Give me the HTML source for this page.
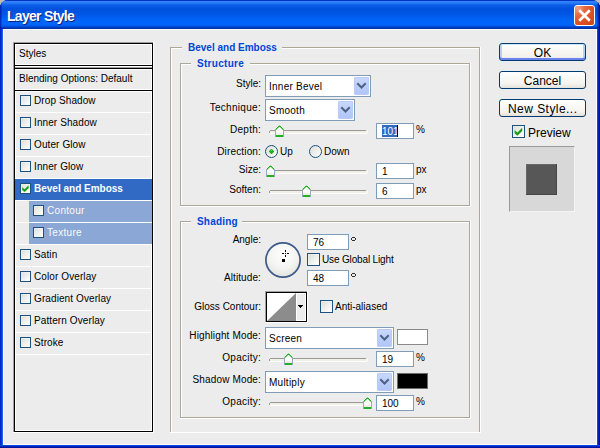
<!DOCTYPE html>
<html><head><meta charset="utf-8"><style>
html,body{margin:0;padding:0;width:600px;height:448px;overflow:hidden;background:#BDBDB5;}
body>div,body>svg{position:absolute;}
</style></head><body>
<div style="left:0px;top:0px;width:600px;height:448px;background:#0831D9;border-radius:8px 8px 0 0;"></div>
<div style="left:0px;top:0px;width:600px;height:29px;background:linear-gradient(to bottom,#0032C4 0px,#0032C4 1px,#3486FA 1px,#2A7AF5 3px,#0C5FEA 5px,#0050DC 9px,#0056E4 14px,#0062F6 19px,#0066FC 24px,#005AEC 26px,#0042CC 27px,#002E9C 29px);border-radius:8px 8px 0 0;"></div>
<div style="left:0px;top:29px;width:1px;height:419px;background:#0028C8;"></div>
<div style="left:1px;top:29px;width:1px;height:419px;background:#0A3CD8;"></div>
<div style="left:2px;top:29px;width:1px;height:419px;background:#1E5CF0;"></div>
<div style="left:597px;top:29px;width:1px;height:419px;background:#0A46E6;"></div>
<div style="left:598px;top:29px;width:1px;height:419px;background:#0024BC;"></div>
<div style="left:599px;top:29px;width:1px;height:419px;background:#00129A;"></div>
<div style="left:0px;top:445px;width:600px;height:1px;background:#0A46E6;"></div>
<div style="left:0px;top:446px;width:600px;height:1px;background:#0024BC;"></div>
<div style="left:0px;top:447px;width:600px;height:1px;background:#00149C;"></div>
<div style="left:3px;top:29px;width:594px;height:416px;background:#ECECEC;"></div>
<div style="left:3px;top:29px;width:594px;height:1px;background:#FFFFFF;"></div>
<div style="left:3px;top:29px;width:1px;height:416px;background:#FFFFFF;"></div>
<div style="left:3px;top:444px;width:594px;height:1px;background:#FFFFFF;"></div>
<div style="left:596px;top:29px;width:1px;height:416px;background:#FFFFFF;"></div>
<div style="left:597px;top:4px;width:1px;height:25px;background:rgba(0,30,170,0.45);"></div>
<div style="left:598px;top:3px;width:1px;height:26px;background:rgba(0,20,150,0.7);"></div>
<div style="left:599px;top:5px;width:1px;height:24px;background:rgba(0,10,120,0.85);"></div>
<div style="left:0px;top:5px;width:1px;height:24px;background:rgba(0,10,150,0.6);"></div>
<div style="left:1px;top:3px;width:1px;height:26px;background:rgba(0,20,170,0.3);"></div>
<div style="left:7px;top:8px;font:bold 14px/16px 'Liberation Sans',sans-serif;color:#FFFFFF;white-space:nowrap;letter-spacing:-0.7px;text-shadow:1px 1px 0 #0A1E7A;">Layer Style</div>
<div style="left:574px;top:5px;width:19px;height:19px;border:1px solid #FFFFFF;border-radius:3px;background:radial-gradient(circle at 15% 12%,#F2A488 0,#E5693F 30%,#DE5324 60%,#C8421A 100%);"></div>
<svg style="left:574px;top:5px" width="21" height="21" viewBox="0 0 21 21"><path d="M6.2 6.2 L14.8 14.8 M14.8 6.2 L6.2 14.8" stroke="#FFFFFF" stroke-width="2.7" stroke-linecap="square"/></svg>
<div style="left:13px;top:42px;width:141px;height:1px;background:#A0A0A0;"></div>
<div style="left:13px;top:42px;width:1px;height:25px;background:#A0A0A0;"></div>
<div style="left:13px;top:66px;width:141px;height:1px;background:#FFFFFF;"></div>
<div style="left:153px;top:42px;width:1px;height:25px;background:#FFFFFF;"></div>
<div style="left:14px;top:43px;width:139px;height:23px;background:#000;"></div>
<div style="left:15px;top:44px;width:137px;height:21px;background:#FFFFFF;"></div>
<div style="left:16px;top:45px;width:135px;height:19px;background:#ECECEC;"></div>
<div style="left:13px;top:67px;width:141px;height:1px;background:#A0A0A0;"></div>
<div style="left:13px;top:67px;width:1px;height:366px;background:#A0A0A0;"></div>
<div style="left:13px;top:432px;width:141px;height:1px;background:#FFFFFF;"></div>
<div style="left:153px;top:67px;width:1px;height:366px;background:#FFFFFF;"></div>
<div style="left:14px;top:68px;width:139px;height:364px;background:#000;"></div>
<div style="left:15px;top:69px;width:137px;height:362px;background:#FFFFFF;"></div>
<div style="left:16px;top:70px;width:135px;height:360px;background:#ECECEC;"></div>
<div style="left:13px;top:65px;width:1px;height:4px;background:#A0A0A0;"></div>
<div style="left:14px;top:65px;width:1px;height:4px;background:#000;"></div>
<div style="left:152px;top:65px;width:1px;height:4px;background:#000;"></div>
<div style="left:153px;top:65px;width:1px;height:4px;background:#FFFFFF;"></div>
<div style="left:19px;top:48px;font:normal 10px/12px 'Liberation Sans',sans-serif;color:#000;white-space:nowrap;">Styles</div>
<div style="left:15px;top:89px;width:137px;height:1px;background:#FFFFFF;"></div>
<div style="left:15px;top:90px;width:137px;height:1px;background:#000;"></div>
<div style="left:15px;top:91px;width:137px;height:1px;background:#FFFFFF;"></div>
<div style="left:19px;top:73px;font:normal 10px/12px 'Liberation Sans',sans-serif;color:#000;white-space:nowrap;">Blending Options: Default</div>
<div style="left:15px;top:112px;width:137px;height:1px;background:#FFFFFF;"></div>
<div style="left:20px;top:95px;width:9px;height:9px;border:1px solid #1C5180;background:linear-gradient(135deg,#DCDCD7 0%,#F6F6F3 70%,#FFFFFF 100%);box-shadow:inset 1px 1px 0 #FFFFFF55;"></div>
<div style="left:34px;top:95px;font:normal 10px/12px 'Liberation Sans',sans-serif;color:#000;white-space:nowrap;letter-spacing:0.1px;">Drop Shadow</div>
<div style="left:15px;top:134px;width:137px;height:1px;background:#FFFFFF;"></div>
<div style="left:20px;top:117px;width:9px;height:9px;border:1px solid #1C5180;background:linear-gradient(135deg,#DCDCD7 0%,#F6F6F3 70%,#FFFFFF 100%);box-shadow:inset 1px 1px 0 #FFFFFF55;"></div>
<div style="left:34px;top:117px;font:normal 10px/12px 'Liberation Sans',sans-serif;color:#000;white-space:nowrap;letter-spacing:0.1px;">Inner Shadow</div>
<div style="left:15px;top:156px;width:137px;height:1px;background:#FFFFFF;"></div>
<div style="left:20px;top:139px;width:9px;height:9px;border:1px solid #1C5180;background:linear-gradient(135deg,#DCDCD7 0%,#F6F6F3 70%,#FFFFFF 100%);box-shadow:inset 1px 1px 0 #FFFFFF55;"></div>
<div style="left:34px;top:139px;font:normal 10px/12px 'Liberation Sans',sans-serif;color:#000;white-space:nowrap;letter-spacing:0.1px;">Outer Glow</div>
<div style="left:15px;top:178px;width:137px;height:1px;background:#FFFFFF;"></div>
<div style="left:20px;top:161px;width:9px;height:9px;border:1px solid #1C5180;background:linear-gradient(135deg,#DCDCD7 0%,#F6F6F3 70%,#FFFFFF 100%);box-shadow:inset 1px 1px 0 #FFFFFF55;"></div>
<div style="left:34px;top:161px;font:normal 10px/12px 'Liberation Sans',sans-serif;color:#000;white-space:nowrap;letter-spacing:0.1px;">Inner Glow</div>
<div style="left:15px;top:200px;width:137px;height:1px;background:#FFFFFF;"></div>
<div style="left:15px;top:179px;width:137px;height:21px;background:#316AC5;"></div>
<div style="left:20px;top:183px;width:9px;height:9px;border:1px solid #1C5180;background:linear-gradient(135deg,#DCDCD7 0%,#F6F6F3 70%,#FFFFFF 100%);box-shadow:inset 1px 1px 0 #FFFFFF55;"></div>
<svg style="left:20px;top:183px" width="11" height="11" viewBox="0 0 13 13"><path d="M2.6 5 L5.4 7.5 L10.2 2.7 L10.2 6.1 L5.4 10.7 L2.6 8.3 Z" fill="#1A9E1A"/></svg>
<div style="left:34px;top:183px;font:bold 10px/12px 'Liberation Sans',sans-serif;color:#FFFFFF;white-space:nowrap;">Bevel and Emboss</div>
<div style="left:15px;top:222px;width:137px;height:1px;background:#FFFFFF;"></div>
<div style="left:29px;top:201px;width:123px;height:21px;background:#8BA7D6;"></div>
<div style="left:33px;top:205px;width:9px;height:9px;border:1px solid #1C5180;background:linear-gradient(135deg,#DCDCD7 0%,#F6F6F3 70%,#FFFFFF 100%);box-shadow:inset 1px 1px 0 #FFFFFF55;"></div>
<div style="left:47px;top:205px;font:normal 10px/12px 'Liberation Sans',sans-serif;color:#FAFAFA;white-space:nowrap;letter-spacing:0.3px;">Contour</div>
<div style="left:15px;top:244px;width:137px;height:1px;background:#FFFFFF;"></div>
<div style="left:29px;top:223px;width:123px;height:21px;background:#8BA7D6;"></div>
<div style="left:33px;top:227px;width:9px;height:9px;border:1px solid #1C5180;background:linear-gradient(135deg,#DCDCD7 0%,#F6F6F3 70%,#FFFFFF 100%);box-shadow:inset 1px 1px 0 #FFFFFF55;"></div>
<div style="left:47px;top:227px;font:normal 10px/12px 'Liberation Sans',sans-serif;color:#FAFAFA;white-space:nowrap;letter-spacing:0.3px;">Texture</div>
<div style="left:15px;top:266px;width:137px;height:1px;background:#FFFFFF;"></div>
<div style="left:20px;top:249px;width:9px;height:9px;border:1px solid #1C5180;background:linear-gradient(135deg,#DCDCD7 0%,#F6F6F3 70%,#FFFFFF 100%);box-shadow:inset 1px 1px 0 #FFFFFF55;"></div>
<div style="left:34px;top:249px;font:normal 10px/12px 'Liberation Sans',sans-serif;color:#000;white-space:nowrap;letter-spacing:0.1px;">Satin</div>
<div style="left:15px;top:288px;width:137px;height:1px;background:#FFFFFF;"></div>
<div style="left:20px;top:271px;width:9px;height:9px;border:1px solid #1C5180;background:linear-gradient(135deg,#DCDCD7 0%,#F6F6F3 70%,#FFFFFF 100%);box-shadow:inset 1px 1px 0 #FFFFFF55;"></div>
<div style="left:34px;top:271px;font:normal 10px/12px 'Liberation Sans',sans-serif;color:#000;white-space:nowrap;letter-spacing:0.1px;">Color Overlay</div>
<div style="left:15px;top:310px;width:137px;height:1px;background:#FFFFFF;"></div>
<div style="left:20px;top:293px;width:9px;height:9px;border:1px solid #1C5180;background:linear-gradient(135deg,#DCDCD7 0%,#F6F6F3 70%,#FFFFFF 100%);box-shadow:inset 1px 1px 0 #FFFFFF55;"></div>
<div style="left:34px;top:293px;font:normal 10px/12px 'Liberation Sans',sans-serif;color:#000;white-space:nowrap;letter-spacing:0.1px;">Gradient Overlay</div>
<div style="left:15px;top:332px;width:137px;height:1px;background:#FFFFFF;"></div>
<div style="left:20px;top:315px;width:9px;height:9px;border:1px solid #1C5180;background:linear-gradient(135deg,#DCDCD7 0%,#F6F6F3 70%,#FFFFFF 100%);box-shadow:inset 1px 1px 0 #FFFFFF55;"></div>
<div style="left:34px;top:315px;font:normal 10px/12px 'Liberation Sans',sans-serif;color:#000;white-space:nowrap;letter-spacing:0.1px;">Pattern Overlay</div>
<div style="left:15px;top:354px;width:137px;height:1px;background:#FFFFFF;"></div>
<div style="left:20px;top:337px;width:9px;height:9px;border:1px solid #1C5180;background:linear-gradient(135deg,#DCDCD7 0%,#F6F6F3 70%,#FFFFFF 100%);box-shadow:inset 1px 1px 0 #FFFFFF55;"></div>
<div style="left:34px;top:337px;font:normal 10px/12px 'Liberation Sans',sans-serif;color:#000;white-space:nowrap;letter-spacing:0.1px;">Stroke</div>
<div style="left:170px;top:47px;width:12px;height:1px;background:#ACA899;"></div>
<div style="left:171px;top:48px;width:11px;height:1px;background:#FFFFFF;"></div>
<div style="left:282px;top:47px;width:198px;height:1px;background:#ACA899;"></div>
<div style="left:282px;top:48px;width:198px;height:1px;background:#FFFFFF;"></div>
<div style="left:170px;top:47px;width:1px;height:385px;background:#ACA899;"></div>
<div style="left:171px;top:48px;width:1px;height:384px;background:#FFFFFF;"></div>
<div style="left:479px;top:47px;width:1px;height:385px;background:#ACA899;"></div>
<div style="left:480px;top:47px;width:1px;height:386px;background:#FFFFFF;"></div>
<div style="left:170px;top:432px;width:311px;height:1px;background:#FFFFFF;"></div>
<div style="left:188px;top:42px;font:bold 10px/12px 'Liberation Sans',sans-serif;color:#0046D5;white-space:nowrap;">Bevel and Emboss</div>
<div style="left:180px;top:63px;width:11px;height:1px;background:#ACA899;"></div>
<div style="left:181px;top:64px;width:10px;height:1px;background:#FFFFFF;"></div>
<div style="left:250px;top:63px;width:220px;height:1px;background:#ACA899;"></div>
<div style="left:250px;top:64px;width:220px;height:1px;background:#FFFFFF;"></div>
<div style="left:180px;top:63px;width:1px;height:143px;background:#ACA899;"></div>
<div style="left:181px;top:64px;width:1px;height:142px;background:#FFFFFF;"></div>
<div style="left:469px;top:63px;width:1px;height:143px;background:#ACA899;"></div>
<div style="left:470px;top:63px;width:1px;height:144px;background:#FFFFFF;"></div>
<div style="left:180px;top:205px;width:290px;height:1px;background:#ACA899;"></div>
<div style="left:180px;top:206px;width:291px;height:1px;background:#FFFFFF;"></div>
<div style="left:197px;top:58px;font:bold 10px/12px 'Liberation Sans',sans-serif;color:#0046D5;white-space:nowrap;letter-spacing:0.3px;">Structure</div>
<div style="left:180px;top:221px;width:11px;height:1px;background:#ACA899;"></div>
<div style="left:181px;top:222px;width:10px;height:1px;background:#FFFFFF;"></div>
<div style="left:242px;top:221px;width:228px;height:1px;background:#ACA899;"></div>
<div style="left:242px;top:222px;width:228px;height:1px;background:#FFFFFF;"></div>
<div style="left:180px;top:221px;width:1px;height:197px;background:#ACA899;"></div>
<div style="left:181px;top:222px;width:1px;height:196px;background:#FFFFFF;"></div>
<div style="left:469px;top:221px;width:1px;height:197px;background:#ACA899;"></div>
<div style="left:470px;top:221px;width:1px;height:198px;background:#FFFFFF;"></div>
<div style="left:180px;top:417px;width:290px;height:1px;background:#ACA899;"></div>
<div style="left:180px;top:418px;width:291px;height:1px;background:#FFFFFF;"></div>
<div style="left:197px;top:216px;font:bold 10px/12px 'Liberation Sans',sans-serif;color:#0046D5;white-space:nowrap;letter-spacing:0.2px;">Shading</div>
<div style="right:339px;top:78px;font:normal 10px/12px 'Liberation Sans',sans-serif;color:#000;white-space:nowrap;text-align:right;">Style:</div>
<div style="left:265px;top:75px;width:104px;height:20px;border:1px solid #7F9DB9;background:#FFFFFF;"></div>
<div style="left:354px;top:77px;width:15px;height:18px;border-radius:2px;background:linear-gradient(to bottom,#CBD9FC 0%,#BACDF9 50%,#B0C6F8 100%);box-shadow:inset 0 0 0 1px #B7CBF6;"></div>
<svg style="left:354px;top:77px" width="15" height="18" viewBox="0 0 15 18"><path d="M4 7 L7.5 10.5 L11 7" stroke="#4D6185" stroke-width="2" fill="none" stroke-linecap="square"/></svg>
<div style="left:269px;top:81px;font:normal 10px/12px 'Liberation Sans',sans-serif;color:#000;white-space:nowrap;letter-spacing:0.25px;">Inner Bevel</div>
<div style="right:339px;top:102px;font:normal 10px/12px 'Liberation Sans',sans-serif;color:#000;white-space:nowrap;text-align:right;letter-spacing:0.3px;">Technique:</div>
<div style="left:265px;top:99px;width:88px;height:20px;border:1px solid #7F9DB9;background:#FFFFFF;"></div>
<div style="left:338px;top:101px;width:15px;height:18px;border-radius:2px;background:linear-gradient(to bottom,#CBD9FC 0%,#BACDF9 50%,#B0C6F8 100%);box-shadow:inset 0 0 0 1px #B7CBF6;"></div>
<svg style="left:338px;top:101px" width="15" height="18" viewBox="0 0 15 18"><path d="M4 7 L7.5 10.5 L11 7" stroke="#4D6185" stroke-width="2" fill="none" stroke-linecap="square"/></svg>
<div style="left:269px;top:105px;font:normal 10px/12px 'Liberation Sans',sans-serif;color:#000;white-space:nowrap;letter-spacing:0.25px;">Smooth</div>
<div style="right:339px;top:124px;font:normal 10px/12px 'Liberation Sans',sans-serif;color:#000;white-space:nowrap;text-align:right;letter-spacing:0.25px;">Depth:</div>
<div style="left:270px;top:130px;width:96px;height:1px;background:#9A9995;"></div>
<div style="left:270px;top:131px;width:97px;height:2px;background:#F1F0E6;"></div>
<div style="left:270px;top:133px;width:97px;height:1px;background:#FFFFFF;"></div>
<div style="left:269px;top:131px;width:1px;height:2px;background:#9A9995;"></div>
<div style="left:367px;top:131px;width:1px;height:2px;background:#FFFFFF;"></div>
<svg style="left:275px;top:125px" width="9" height="12" shape-rendering="crispEdges"><rect x="1" y="4" width="7" height="6" fill="#FAFAF8"/><rect x="2" y="3" width="5" height="1" fill="#FAFAF8"/><rect x="3" y="2" width="3" height="1" fill="#FAFAF8"/><rect x="4" y="0" width="1" height="1" fill="#9CC79C"/><rect x="3" y="1" width="3" height="1" fill="#22B022"/><rect x="2" y="2" width="1" height="1" fill="#22B022"/><rect x="6" y="2" width="1" height="1" fill="#22B022"/><rect x="3" y="2" width="1" height="1" fill="#7FD27F"/><rect x="5" y="2" width="1" height="1" fill="#7FD27F"/><rect x="1" y="3" width="1" height="1" fill="#22B022"/><rect x="7" y="3" width="1" height="1" fill="#22B022"/><rect x="2" y="3" width="1" height="1" fill="#7FD27F"/><rect x="6" y="3" width="1" height="1" fill="#7FD27F"/><rect x="0" y="4" width="1" height="8" fill="#98A9BB"/><rect x="8" y="4" width="1" height="8" fill="#98A9BB"/><rect x="1" y="4" width="1" height="1" fill="#7FD27F"/><rect x="7" y="4" width="1" height="1" fill="#7FD27F"/><rect x="1" y="5" width="7" height="2" fill="#FFFFFF"/><rect x="1" y="8" width="7" height="2" fill="#EEEEEA"/><rect x="1" y="10" width="7" height="2" fill="#22B022"/></svg>
<div style="left:376px;top:123px;width:36px;height:14px;border:1px solid #7F9DB9;background:#FFFFFF;"></div>
<div style="left:382px;top:125px;width:15px;height:12px;background:#316AC5;"></div>
<div style="left:382px;top:126px;font:normal 10px/12px 'Liberation Sans',sans-serif;color:#FFFFFF;white-space:nowrap;">101</div>
<div style="left:397px;top:125px;width:1px;height:12px;background:#000;"></div>
<div style="left:416px;top:124px;font:normal 10px/12px 'Liberation Sans',sans-serif;color:#000;white-space:nowrap;">%</div>
<div style="right:339px;top:146px;font:normal 10px/12px 'Liberation Sans',sans-serif;color:#000;white-space:nowrap;text-align:right;letter-spacing:0.15px;">Direction:</div>
<div style="left:265px;top:145px;width:11px;height:11px;border:1px solid #1C5180;border-radius:50%;background:linear-gradient(135deg,#DCDCD7 0%,#FFFFFF 100%);"></div>
<svg style="left:269px;top:149px" width="5" height="5" shape-rendering="crispEdges"><rect x="1" y="0" width="3" height="5" fill="#9ADB9A"/><rect x="0" y="1" width="5" height="3" fill="#9ADB9A"/><rect x="2" y="0" width="1" height="5" fill="#22B022"/><rect x="0" y="2" width="5" height="1" fill="#22B022"/><rect x="1" y="1" width="3" height="3" fill="#22B022"/><rect x="2" y="1" width="1" height="1" fill="#6CD46C"/></svg>
<div style="left:280px;top:146px;font:normal 10px/12px 'Liberation Sans',sans-serif;color:#000;white-space:nowrap;">Up</div>
<div style="left:309px;top:145px;width:11px;height:11px;border:1px solid #1C5180;border-radius:50%;background:linear-gradient(135deg,#DCDCD7 0%,#FFFFFF 100%);"></div>
<div style="left:324px;top:146px;font:normal 10px/12px 'Liberation Sans',sans-serif;color:#000;white-space:nowrap;">Down</div>
<div style="right:339px;top:164px;font:normal 10px/12px 'Liberation Sans',sans-serif;color:#000;white-space:nowrap;text-align:right;">Size:</div>
<div style="left:270px;top:170px;width:96px;height:1px;background:#9A9995;"></div>
<div style="left:270px;top:171px;width:97px;height:2px;background:#F1F0E6;"></div>
<div style="left:270px;top:173px;width:97px;height:1px;background:#FFFFFF;"></div>
<div style="left:269px;top:171px;width:1px;height:2px;background:#9A9995;"></div>
<div style="left:367px;top:171px;width:1px;height:2px;background:#FFFFFF;"></div>
<svg style="left:266px;top:165px" width="9" height="12" shape-rendering="crispEdges"><rect x="1" y="4" width="7" height="6" fill="#FAFAF8"/><rect x="2" y="3" width="5" height="1" fill="#FAFAF8"/><rect x="3" y="2" width="3" height="1" fill="#FAFAF8"/><rect x="4" y="0" width="1" height="1" fill="#9CC79C"/><rect x="3" y="1" width="3" height="1" fill="#22B022"/><rect x="2" y="2" width="1" height="1" fill="#22B022"/><rect x="6" y="2" width="1" height="1" fill="#22B022"/><rect x="3" y="2" width="1" height="1" fill="#7FD27F"/><rect x="5" y="2" width="1" height="1" fill="#7FD27F"/><rect x="1" y="3" width="1" height="1" fill="#22B022"/><rect x="7" y="3" width="1" height="1" fill="#22B022"/><rect x="2" y="3" width="1" height="1" fill="#7FD27F"/><rect x="6" y="3" width="1" height="1" fill="#7FD27F"/><rect x="0" y="4" width="1" height="8" fill="#98A9BB"/><rect x="8" y="4" width="1" height="8" fill="#98A9BB"/><rect x="1" y="4" width="1" height="1" fill="#7FD27F"/><rect x="7" y="4" width="1" height="1" fill="#7FD27F"/><rect x="1" y="5" width="7" height="2" fill="#FFFFFF"/><rect x="1" y="8" width="7" height="2" fill="#EEEEEA"/><rect x="1" y="10" width="7" height="2" fill="#22B022"/></svg>
<div style="left:376px;top:163px;width:36px;height:14px;border:1px solid #7F9DB9;background:#FFFFFF;"></div>
<div style="left:382px;top:166px;font:normal 10px/12px 'Liberation Sans',sans-serif;color:#000;white-space:nowrap;">1</div>
<div style="left:416px;top:164px;font:normal 10px/12px 'Liberation Sans',sans-serif;color:#000;white-space:nowrap;">px</div>
<div style="right:339px;top:184px;font:normal 10px/12px 'Liberation Sans',sans-serif;color:#000;white-space:nowrap;text-align:right;">Soften:</div>
<div style="left:270px;top:190px;width:96px;height:1px;background:#9A9995;"></div>
<div style="left:270px;top:191px;width:97px;height:2px;background:#F1F0E6;"></div>
<div style="left:270px;top:193px;width:97px;height:1px;background:#FFFFFF;"></div>
<div style="left:269px;top:191px;width:1px;height:2px;background:#9A9995;"></div>
<div style="left:367px;top:191px;width:1px;height:2px;background:#FFFFFF;"></div>
<svg style="left:302px;top:185px" width="9" height="12" shape-rendering="crispEdges"><rect x="1" y="4" width="7" height="6" fill="#FAFAF8"/><rect x="2" y="3" width="5" height="1" fill="#FAFAF8"/><rect x="3" y="2" width="3" height="1" fill="#FAFAF8"/><rect x="4" y="0" width="1" height="1" fill="#9CC79C"/><rect x="3" y="1" width="3" height="1" fill="#22B022"/><rect x="2" y="2" width="1" height="1" fill="#22B022"/><rect x="6" y="2" width="1" height="1" fill="#22B022"/><rect x="3" y="2" width="1" height="1" fill="#7FD27F"/><rect x="5" y="2" width="1" height="1" fill="#7FD27F"/><rect x="1" y="3" width="1" height="1" fill="#22B022"/><rect x="7" y="3" width="1" height="1" fill="#22B022"/><rect x="2" y="3" width="1" height="1" fill="#7FD27F"/><rect x="6" y="3" width="1" height="1" fill="#7FD27F"/><rect x="0" y="4" width="1" height="8" fill="#98A9BB"/><rect x="8" y="4" width="1" height="8" fill="#98A9BB"/><rect x="1" y="4" width="1" height="1" fill="#7FD27F"/><rect x="7" y="4" width="1" height="1" fill="#7FD27F"/><rect x="1" y="5" width="7" height="2" fill="#FFFFFF"/><rect x="1" y="8" width="7" height="2" fill="#EEEEEA"/><rect x="1" y="10" width="7" height="2" fill="#22B022"/></svg>
<div style="left:376px;top:183px;width:36px;height:14px;border:1px solid #7F9DB9;background:#FFFFFF;"></div>
<div style="left:382px;top:186px;font:normal 10px/12px 'Liberation Sans',sans-serif;color:#000;white-space:nowrap;">6</div>
<div style="left:416px;top:184px;font:normal 10px/12px 'Liberation Sans',sans-serif;color:#000;white-space:nowrap;">px</div>
<div style="right:339px;top:234px;font:normal 10px/12px 'Liberation Sans',sans-serif;color:#000;white-space:nowrap;text-align:right;">Angle:</div>
<div style="right:339px;top:272px;font:normal 10px/12px 'Liberation Sans',sans-serif;color:#000;white-space:nowrap;text-align:right;letter-spacing:0.1px;">Altitude:</div>
<svg style="left:265px;top:242px" width="36" height="36" viewBox="0 0 36 36"><defs><radialGradient id="cg" cx="50%" cy="35%" r="65%"><stop offset="0" stop-color="#FFFFFF"/><stop offset="0.6" stop-color="#F4F4F2"/><stop offset="1" stop-color="#E2E2DE"/></radialGradient></defs><circle cx="18" cy="18" r="17.1" fill="url(#cg)" stroke="#3D5A8A" stroke-width="1.7"/></svg>
<div style="left:282px;top:259px;width:3px;height:3px;background:#000;"></div>
<svg style="left:280px;top:248px" width="12" height="12" viewBox="0 0 12 12"><path d="M2 5.5 H4 M7 5.5 H9 M5.5 2 V4 M5.5 7 V9" stroke="#000" stroke-width="1"/><rect x="5" y="5" width="1" height="1" fill="#000"/></svg>
<div style="left:307px;top:234px;width:40px;height:14px;border:1px solid #7F9DB9;background:#FFFFFF;"></div>
<div style="left:313px;top:237px;font:normal 10px/12px 'Liberation Sans',sans-serif;color:#000;white-space:nowrap;">76</div>
<div style="left:352px;top:237px;width:3px;height:1px;background:#303030;"></div>
<div style="left:351px;top:238px;width:1px;height:2px;background:#303030;"></div>
<div style="left:355px;top:238px;width:1px;height:2px;background:#303030;"></div>
<div style="left:352px;top:240px;width:3px;height:1px;background:#303030;"></div>
<div style="left:307px;top:253px;width:11px;height:11px;border:1px solid #1C5180;background:linear-gradient(135deg,#DCDCD7 0%,#F6F6F3 70%,#FFFFFF 100%);box-shadow:inset 1px 1px 0 #FFFFFF55;"></div>
<div style="left:322px;top:254px;font:normal 10px/12px 'Liberation Sans',sans-serif;color:#000;white-space:nowrap;letter-spacing:-0.15px;">Use Global Light</div>
<div style="left:307px;top:270px;width:40px;height:14px;border:1px solid #7F9DB9;background:#FFFFFF;"></div>
<div style="left:313px;top:273px;font:normal 10px/12px 'Liberation Sans',sans-serif;color:#000;white-space:nowrap;">48</div>
<div style="left:352px;top:273px;width:3px;height:1px;background:#303030;"></div>
<div style="left:351px;top:274px;width:1px;height:2px;background:#303030;"></div>
<div style="left:355px;top:274px;width:1px;height:2px;background:#303030;"></div>
<div style="left:352px;top:276px;width:3px;height:1px;background:#303030;"></div>
<div style="right:339px;top:301px;font:normal 10px/12px 'Liberation Sans',sans-serif;color:#000;white-space:nowrap;text-align:right;">Gloss Contour:</div>
<div style="left:265px;top:291px;width:43px;height:32px;background:#FFFFFF;"></div>
<div style="left:265px;top:291px;width:42px;height:1px;background:#A0A0A0;"></div>
<div style="left:265px;top:291px;width:1px;height:31px;background:#A0A0A0;"></div>
<div style="left:266px;top:292px;width:41px;height:30px;background:#000;"></div>
<div style="left:267px;top:293px;width:39px;height:28px;background:#FFFFFF;"></div>
<div style="left:297px;top:294px;width:8px;height:26px;background:#ECECEC;"></div>
<svg style="left:267px;top:293px" width="29" height="28" viewBox="0 0 29 28"><path d="M0 28 L29 0 L29 28 Z" fill="#8C8C8C"/></svg>
<div style="left:298px;top:305px;width:5px;height:1px;background:#000;"></div>
<div style="left:299px;top:306px;width:3px;height:1px;background:#000;"></div>
<div style="left:300px;top:307px;width:1px;height:1px;background:#000;"></div>
<div style="left:320px;top:300px;width:11px;height:11px;border:1px solid #1C5180;background:linear-gradient(135deg,#DCDCD7 0%,#F6F6F3 70%,#FFFFFF 100%);box-shadow:inset 1px 1px 0 #FFFFFF55;"></div>
<div style="left:335px;top:301px;font:normal 10px/12px 'Liberation Sans',sans-serif;color:#000;white-space:nowrap;">Anti-aliased</div>
<div style="right:339px;top:330px;font:normal 10px/12px 'Liberation Sans',sans-serif;color:#000;white-space:nowrap;text-align:right;letter-spacing:0.15px;">Highlight Mode:</div>
<div style="left:265px;top:327px;width:127px;height:20px;border:1px solid #7F9DB9;background:#FFFFFF;"></div>
<div style="left:377px;top:329px;width:15px;height:18px;border-radius:2px;background:linear-gradient(to bottom,#CBD9FC 0%,#BACDF9 50%,#B0C6F8 100%);box-shadow:inset 0 0 0 1px #B7CBF6;"></div>
<svg style="left:377px;top:329px" width="15" height="18" viewBox="0 0 15 18"><path d="M4 7 L7.5 10.5 L11 7" stroke="#4D6185" stroke-width="2" fill="none" stroke-linecap="square"/></svg>
<div style="left:269px;top:333px;font:normal 10px/12px 'Liberation Sans',sans-serif;color:#000;white-space:nowrap;letter-spacing:0.25px;">Screen</div>
<div style="left:397px;top:329px;width:31px;height:16px;background:#FFFFFF;box-sizing:border-box;border:1px solid #8A8A8A;"></div>
<div style="right:339px;top:352px;font:normal 10px/12px 'Liberation Sans',sans-serif;color:#000;white-space:nowrap;text-align:right;letter-spacing:0.25px;">Opacity:</div>
<div style="left:270px;top:358px;width:96px;height:1px;background:#9A9995;"></div>
<div style="left:270px;top:359px;width:97px;height:2px;background:#F1F0E6;"></div>
<div style="left:270px;top:361px;width:97px;height:1px;background:#FFFFFF;"></div>
<div style="left:269px;top:359px;width:1px;height:2px;background:#9A9995;"></div>
<div style="left:367px;top:359px;width:1px;height:2px;background:#FFFFFF;"></div>
<svg style="left:284px;top:353px" width="9" height="12" shape-rendering="crispEdges"><rect x="1" y="4" width="7" height="6" fill="#FAFAF8"/><rect x="2" y="3" width="5" height="1" fill="#FAFAF8"/><rect x="3" y="2" width="3" height="1" fill="#FAFAF8"/><rect x="4" y="0" width="1" height="1" fill="#9CC79C"/><rect x="3" y="1" width="3" height="1" fill="#22B022"/><rect x="2" y="2" width="1" height="1" fill="#22B022"/><rect x="6" y="2" width="1" height="1" fill="#22B022"/><rect x="3" y="2" width="1" height="1" fill="#7FD27F"/><rect x="5" y="2" width="1" height="1" fill="#7FD27F"/><rect x="1" y="3" width="1" height="1" fill="#22B022"/><rect x="7" y="3" width="1" height="1" fill="#22B022"/><rect x="2" y="3" width="1" height="1" fill="#7FD27F"/><rect x="6" y="3" width="1" height="1" fill="#7FD27F"/><rect x="0" y="4" width="1" height="8" fill="#98A9BB"/><rect x="8" y="4" width="1" height="8" fill="#98A9BB"/><rect x="1" y="4" width="1" height="1" fill="#7FD27F"/><rect x="7" y="4" width="1" height="1" fill="#7FD27F"/><rect x="1" y="5" width="7" height="2" fill="#FFFFFF"/><rect x="1" y="8" width="7" height="2" fill="#EEEEEA"/><rect x="1" y="10" width="7" height="2" fill="#22B022"/></svg>
<div style="left:376px;top:351px;width:36px;height:14px;border:1px solid #7F9DB9;background:#FFFFFF;"></div>
<div style="left:382px;top:354px;font:normal 10px/12px 'Liberation Sans',sans-serif;color:#000;white-space:nowrap;">19</div>
<div style="left:416px;top:352px;font:normal 10px/12px 'Liberation Sans',sans-serif;color:#000;white-space:nowrap;">%</div>
<div style="right:339px;top:374px;font:normal 10px/12px 'Liberation Sans',sans-serif;color:#000;white-space:nowrap;text-align:right;letter-spacing:0.15px;">Shadow Mode:</div>
<div style="left:265px;top:371px;width:127px;height:20px;border:1px solid #7F9DB9;background:#FFFFFF;"></div>
<div style="left:377px;top:373px;width:15px;height:18px;border-radius:2px;background:linear-gradient(to bottom,#CBD9FC 0%,#BACDF9 50%,#B0C6F8 100%);box-shadow:inset 0 0 0 1px #B7CBF6;"></div>
<svg style="left:377px;top:373px" width="15" height="18" viewBox="0 0 15 18"><path d="M4 7 L7.5 10.5 L11 7" stroke="#4D6185" stroke-width="2" fill="none" stroke-linecap="square"/></svg>
<div style="left:269px;top:377px;font:normal 10px/12px 'Liberation Sans',sans-serif;color:#000;white-space:nowrap;letter-spacing:0.25px;">Multiply</div>
<div style="left:397px;top:373px;width:31px;height:16px;background:#000;box-sizing:border-box;border:1px solid #6A6A6A;"></div>
<div style="right:339px;top:396px;font:normal 10px/12px 'Liberation Sans',sans-serif;color:#000;white-space:nowrap;text-align:right;letter-spacing:0.25px;">Opacity:</div>
<div style="left:270px;top:402px;width:96px;height:1px;background:#9A9995;"></div>
<div style="left:270px;top:403px;width:97px;height:2px;background:#F1F0E6;"></div>
<div style="left:270px;top:405px;width:97px;height:1px;background:#FFFFFF;"></div>
<div style="left:269px;top:403px;width:1px;height:2px;background:#9A9995;"></div>
<div style="left:367px;top:403px;width:1px;height:2px;background:#FFFFFF;"></div>
<svg style="left:363px;top:397px" width="9" height="12" shape-rendering="crispEdges"><rect x="1" y="4" width="7" height="6" fill="#FAFAF8"/><rect x="2" y="3" width="5" height="1" fill="#FAFAF8"/><rect x="3" y="2" width="3" height="1" fill="#FAFAF8"/><rect x="4" y="0" width="1" height="1" fill="#9CC79C"/><rect x="3" y="1" width="3" height="1" fill="#22B022"/><rect x="2" y="2" width="1" height="1" fill="#22B022"/><rect x="6" y="2" width="1" height="1" fill="#22B022"/><rect x="3" y="2" width="1" height="1" fill="#7FD27F"/><rect x="5" y="2" width="1" height="1" fill="#7FD27F"/><rect x="1" y="3" width="1" height="1" fill="#22B022"/><rect x="7" y="3" width="1" height="1" fill="#22B022"/><rect x="2" y="3" width="1" height="1" fill="#7FD27F"/><rect x="6" y="3" width="1" height="1" fill="#7FD27F"/><rect x="0" y="4" width="1" height="8" fill="#98A9BB"/><rect x="8" y="4" width="1" height="8" fill="#98A9BB"/><rect x="1" y="4" width="1" height="1" fill="#7FD27F"/><rect x="7" y="4" width="1" height="1" fill="#7FD27F"/><rect x="1" y="5" width="7" height="2" fill="#FFFFFF"/><rect x="1" y="8" width="7" height="2" fill="#EEEEEA"/><rect x="1" y="10" width="7" height="2" fill="#22B022"/></svg>
<div style="left:376px;top:395px;width:36px;height:14px;border:1px solid #7F9DB9;background:#FFFFFF;"></div>
<div style="left:382px;top:398px;font:normal 10px/12px 'Liberation Sans',sans-serif;color:#000;white-space:nowrap;">100</div>
<div style="left:416px;top:396px;font:normal 10px/12px 'Liberation Sans',sans-serif;color:#000;white-space:nowrap;">%</div>
<div style="left:499px;top:43px;width:85px;height:16px;border:1px solid #003C74;border-radius:3px;background:linear-gradient(to bottom,#FFFFFF 0%,#F4F3EE 70%,#ECEBE6 100%);box-shadow:inset 0 1px 0 #CEE7FF,inset 0 -2px 0 #6982EE,inset 2px 0 0 #B8D0F5,inset -2px 0 0 #B8D0F5;"></div>
<div style="left:499px;top:46px;width:87px;text-align:center;font:12px/14px 'Liberation Sans',sans-serif;color:#000;white-space:nowrap;letter-spacing:0px;text-indent:0px;">OK</div>
<div style="left:499px;top:71px;width:85px;height:16px;border:1px solid #003C74;border-radius:3px;background:linear-gradient(to bottom,#FFFFFF 0%,#F4F3EE 75%,#E3E1D8 100%);"></div>
<div style="left:499px;top:74px;width:87px;text-align:center;font:12px/14px 'Liberation Sans',sans-serif;color:#000;white-space:nowrap;letter-spacing:0px;text-indent:0px;">Cancel</div>
<div style="left:499px;top:99px;width:85px;height:16px;border:1px solid #003C74;border-radius:3px;background:linear-gradient(to bottom,#FFFFFF 0%,#F4F3EE 75%,#E3E1D8 100%);"></div>
<div style="left:499px;top:102px;width:87px;text-align:center;font:12px/14px 'Liberation Sans',sans-serif;color:#000;white-space:nowrap;letter-spacing:0.45px;text-indent:0.45px;">New Style...</div>
<div style="left:512px;top:125px;width:11px;height:11px;border:1px solid #1C5180;background:linear-gradient(135deg,#DCDCD7 0%,#F6F6F3 70%,#FFFFFF 100%);box-shadow:inset 1px 1px 0 #FFFFFF55;"></div>
<svg style="left:512px;top:125px" width="13" height="13" viewBox="0 0 13 13"><path d="M2.6 5 L5.4 7.5 L10.2 2.7 L10.2 6.1 L5.4 10.7 L2.6 8.3 Z" fill="#1A9E1A"/></svg>
<div style="left:528px;top:126px;font:normal 12px/14px 'Liberation Sans',sans-serif;color:#000;white-space:nowrap;">Preview</div>
<div style="left:509px;top:146px;width:66px;height:66px;background:#D8D8D8;border-top:1px solid #9A9A9A;border-left:1px solid #9A9A9A;border-right:1px solid #F4F4F4;border-bottom:1px solid #F4F4F4;box-sizing:border-box;"></div>
<div style="left:526px;top:164px;width:31px;height:31px;background:#575757;box-shadow:inset -1px -1px 0 #444,inset 1px 1px 0 #666;"></div>
</body></html>
